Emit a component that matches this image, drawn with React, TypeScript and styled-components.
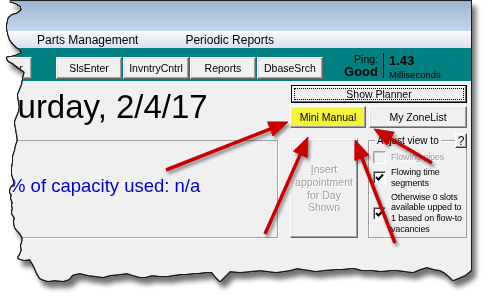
import styled, { createGlobalStyle } from 'styled-components';

const GlobalStyle = createGlobalStyle`
  html, body {
    margin: 0;
    background: #fff;
  }
  body {
    width: 490px;
    height: 306px;
    overflow: hidden;
    font-family: "Liberation Sans", Arial, sans-serif;
  }
`;

// ragged left + bottom edge of the torn screenshot
const tear: [number, number][] = [
  [10, 1], [471, 1], [471, 270], [465, 275], [458, 278], [453, 280], [449, 276],
  [444, 272], [440, 270], [434, 269], [427, 267], [420, 269], [413, 272],
  [405, 271], [398, 270], [390, 270], [381, 271], [373, 270], [362, 270],
  [355, 268], [350, 268], [342, 269], [335, 269], [323, 270], [316, 271],
  [310, 270], [303, 269], [297, 268], [290, 270], [283, 271], [276, 272],
  [268, 271], [260, 270], [250, 271], [240, 272], [230, 271], [226, 275],
  [220, 281], [216, 277], [212, 272], [205, 272], [198, 273], [193, 273],
  [186, 274], [180, 274], [173, 275], [167, 276], [160, 276], [152, 275],
  [145, 277], [140, 277], [133, 275], [127, 273], [120, 274], [110, 275],
  [103, 277], [96, 276], [88, 275], [80, 273], [75, 274], [72, 275], [69, 279],
  [63, 281], [55, 280], [48, 281], [42, 279], [40, 278], [37, 273], [35, 268],
  [33, 264], [31, 261], [30, 259], [24, 260], [18, 258], [20, 255], [22, 250],
  [21, 246], [22, 243], [23, 238], [20, 233], [17, 230], [15, 227], [14, 222],
  [15, 218], [12, 213], [13, 208], [12, 205], [13, 203], [11, 198], [12, 195],
  [10, 192], [11, 188], [15, 184], [14, 180], [12, 174], [12, 168], [13, 163],
  [13, 157], [15, 151], [16, 146], [18, 140], [17, 134], [16, 128], [15, 122],
  [17, 117], [19, 112], [20, 107], [19, 101], [18, 95], [20, 90], [22, 85],
  [23, 80], [24, 76], [25, 72], [21, 69], [18, 67], [13, 63], [9, 61], [7, 58],
  [12, 57], [16, 56], [23, 53], [20, 49], [17, 47], [15, 45], [12, 42], [10, 39],
  [9, 36], [8, 32], [7, 27], [8, 22], [9, 18], [13, 15], [17, 14], [20, 12],
  [22, 10], [21, 6], [16, 3],
];
const tearPath = `polygon(${tear.map(([x, y]) => `${x}px ${y}px`).join(', ')})`;

const arrows = [
  { x1: 166, y1: 170, x2: 288, y2: 122 },
  { x1: 265, y1: 234, x2: 308, y2: 137 },
  { x1: 395, y1: 243, x2: 355, y2: 140 },
  { x1: 432, y1: 163, x2: 374, y2: 129 },
];

const Page = styled.div`
  position: relative;
  width: 490px;
  height: 306px;
`;

const Frame = styled.div`
  width: 471px;
  filter: drop-shadow(1px 0 0 #1c1c1c) drop-shadow(-1px 0 0 #1c1c1c)
    drop-shadow(0 1px 0 #1c1c1c) drop-shadow(0 -1px 0 #1c1c1c)
    drop-shadow(4px 6px 2.5px rgba(0, 0, 0, 0.55));
`;

const Window = styled.div`
  width: 471px;
  height: 284px;
  display: flex;
  flex-direction: column;
  overflow: hidden;
  background: #f0f0f0;
  clip-path: ${tearPath};
`;

const TitleBar = styled.div`
  height: 31px;
  flex: none;
  background: linear-gradient(to bottom, #9ab3d3, #c6d7ed);
`;

const MenuBar = styled.div`
  height: 17px;
  flex: none;
  display: flex;
  align-items: center;
  gap: 47px;
  padding-left: 37px;
  font-size: 12px;
  color: #000;
  background: linear-gradient(to bottom, #ffffff 0, #f1f3fa 22%, #dce0f1 100%);
`;

const Toolbar = styled.div`
  height: 24px;
  flex: none;
  display: flex;
  align-items: flex-start;
  gap: 1px;
  padding-top: 9px;
  background: #008080;
`;

const ToolButton = styled.div<{ $lead?: boolean }>`
  width: 66px;
  height: 22px;
  box-sizing: border-box;
  flex: none;
  display: flex;
  align-items: center;
  justify-content: center;
  margin-left: ${(p) => (p.$lead ? '-34px' : '0')};
  margin-right: ${(p) => (p.$lead ? '23px' : '0')};
  background: #f0f0f0;
  border: 1px solid;
  border-color: #fff #696969 #696969 #fff;
  box-shadow: inset -1px -1px #a0a0a0, inset 1px 1px #e3e3e3;
  font-size: 10.5px;
  color: #000;
`;

const Ping = styled.div`
  display: flex;
  align-items: stretch;
  height: 25px;
  margin: -4px 0 0 14px;
`;

const PingLabels = styled.div`
  width: 40px;
  display: flex;
  flex-direction: column;
  align-items: flex-end;
  color: #000;
`;

const PingSmall = styled.span<{ $size: number }>`
  font-size: ${(p) => p.$size}px;
  line-height: 11px;
  margin-top: 1px;
`;

const PingBig = styled.span`
  font-size: 13px;
  font-weight: bold;
  line-height: 14px;
`;

const Divider = styled.div`
  width: 1px;
  margin: 0 5px;
  background: #000;
`;

const PingValues = styled.div`
  display: flex;
  flex-direction: column;
  padding-top: 1px;
  color: #000;
`;

const Content = styled.div`
  flex: 1;
  display: flex;
  flex-direction: column;
  padding: 4px 4px 0 0;
`;

const TopRow = styled.div`
  display: flex;
  justify-content: space-between;
  align-items: flex-start;
`;

const DateTitle = styled.div`
  margin: 5px 0 0 -32px;
  font-size: 33px;
  line-height: 33px;
  color: #000;
  white-space: nowrap;
`;

const SideButtons = styled.div`
  width: 177px;
  flex: none;
  display: flex;
  flex-direction: column;
  gap: 3px;
`;

const ButtonRow = styled.div`
  display: flex;
  gap: 3px;
`;

const Button = styled.div<{ $w?: number; $h: number; $yellow?: boolean; $disabled?: boolean }>`
  width: ${(p) => (p.$w ? `${p.$w}px` : 'auto')};
  flex: ${(p) => (p.$w ? 'none' : '1 1 auto')};
  height: ${(p) => p.$h}px;
  box-sizing: border-box;
  display: flex;
  align-items: center;
  justify-content: center;
  text-align: center;
  background: ${(p) => (p.$yellow ? '#f4f43a' : '#f0f0f0')};
  border: 1px solid;
  border-color: #fff #696969 #696969 #fff;
  box-shadow: inset -1px -1px #a0a0a0, inset 1px 1px #e3e3e3;
  font-size: 10.5px;
  line-height: 12.7px;
  color: ${(p) => (p.$disabled ? '#a0a0a0' : '#000')};
  text-shadow: ${(p) => (p.$disabled ? '1px 1px 0 #fff' : 'none')};
`;

const DefaultButton = styled(Button)`
  flex: none;
  margin-left: 1px;
  border-color: #000;
  box-shadow: inset -1px -1px #696969, inset 1px 1px #fff;
  outline: 1px dotted #000;
  outline-offset: -4px;
`;

const Key = styled.span`
  text-decoration: underline;
`;

const BottomRow = styled.div`
  display: flex;
  height: 98px;
  margin-top: 12px;
`;

const CapacityBox = styled.div`
  flex: 1;
  margin: 0 12px 0 -10px;
  padding: 34px 0 0 18px;
  border: 1px solid #a0a0a0;
  box-shadow: 1px 1px #fff;
  font-size: 18.5px;
  line-height: 22px;
  color: #0000cc;
  white-space: nowrap;
`;

const InsertButton = styled(Button)`
  margin: -1px 10px 0 0;
`;

const GroupBox = styled.div`
  width: 99px;
  flex: none;
  box-sizing: border-box;
  display: flex;
  flex-direction: column;
  gap: 3px;
  padding: 0 2px 0 4px;
  border: 1px solid #a0a0a0;
  box-shadow: inset 1px 1px #fff;
`;

const GroupHead = styled.div`
  display: flex;
  justify-content: space-between;
  align-items: center;
  height: 15px;
  margin: -8px -3px 0 0;
`;

const Legend = styled.span`
  margin-left: 2px;
  padding: 0 2px;
  background: #f0f0f0;
  font-size: 10px;
  color: #000;
`;

const HelpButton = styled.div`
  width: 12px;
  height: 15px;
  box-sizing: border-box;
  display: flex;
  align-items: center;
  justify-content: center;
  background: #f0f0f0;
  border: 1px solid;
  border-color: #fff #404040 #404040 #fff;
  box-shadow: inset -1px -1px #a0a0a0;
  font-size: 12px;
  color: #000;
`;

const Option = styled.div`
  display: flex;
  align-items: center;
  gap: 5px;
`;

const Box = styled.span<{ $disabled?: boolean }>`
  width: 13px;
  height: 13px;
  flex: none;
  box-sizing: border-box;
  display: flex;
  align-items: center;
  justify-content: center;
  background: ${(p) => (p.$disabled ? '#f0f0f0' : '#fff')};
  border: 1px solid;
  border-color: #a0a0a0 #fff #fff #a0a0a0;
  box-shadow: inset 1px 1px ${(p) => (p.$disabled ? '#c8c8c8' : '#404040')};
`;

const OptionText = styled.span<{ $disabled?: boolean }>`
  font-size: 9px;
  letter-spacing: -0.15px;
  line-height: 10.8px;
  color: ${(p) => (p.$disabled ? '#a0a0a0' : '#000')};
  text-shadow: ${(p) => (p.$disabled ? '1px 1px 0 #fff' : 'none')};
  white-space: nowrap;
`;

const ArrowLayer = styled.svg`
  position: absolute;
  left: 0;
  top: 0;
  pointer-events: none;
  filter: drop-shadow(2px 3px 1.5px rgba(0, 0, 0, 0.4));
`;

const Check = ({ on, disabled }: { on?: boolean; disabled?: boolean }) => (
  <Box $disabled={disabled}>
    {on && (
      <svg width="9" height="9" viewBox="0 0 9 9">
        <path d="M1 4 L3.5 6.5 L8 1.5" fill="none" stroke="#000" strokeWidth="2" />
      </svg>
    )}
  </Box>
);

const Arrow = ({ x1, y1, x2, y2 }: { x1: number; y1: number; x2: number; y2: number }) => {
  const len = Math.hypot(x2 - x1, y2 - y1);
  const ux = (x2 - x1) / len;
  const uy = (y2 - y1) / len;
  const bx = x2 - ux * 19;
  const by = y2 - uy * 19;
  const w = 7.5;
  return (
    <g fill="#c80000" stroke="#c80000">
      <line x1={x1} y1={y1} x2={bx + ux * 3} y2={by + uy * 3} strokeWidth="3.5" />
      <polygon
        strokeWidth="1"
        strokeLinejoin="round"
        points={`${x2},${y2} ${bx - uy * w},${by + ux * w} ${bx + uy * w},${by - ux * w}`}
      />
    </g>
  );
};

export default function App() {
  return (
    <Page>
      <GlobalStyle />
      <Frame>
        <Window>
          <TitleBar />
          <MenuBar>
            <span>Parts Management</span>
            <span>Periodic Reports</span>
          </MenuBar>
          <Toolbar>
            <ToolButton $lead>Scheduler</ToolButton>
            <ToolButton>SlsEnter</ToolButton>
            <ToolButton>InvntryCntrl</ToolButton>
            <ToolButton>Reports</ToolButton>
            <ToolButton>DbaseSrch</ToolButton>
            <Ping>
              <PingLabels>
                <PingSmall $size={10.5}>Ping:</PingSmall>
                <PingBig>Good</PingBig>
              </PingLabels>
              <Divider />
              <PingValues>
                <PingBig>1.43</PingBig>
                <PingSmall $size={9.5}>Milliseconds</PingSmall>
              </PingValues>
            </Ping>
          </Toolbar>
          <Content>
            <TopRow>
              <DateTitle>Saturday, 2/4/17</DateTitle>
              <SideButtons>
                <DefaultButton $h={18}>
                  <span>
                    <Key>S</Key>how Planner
                  </span>
                </DefaultButton>
                <ButtonRow>
                  <Button $w={76} $h={22} $yellow>
                    Mini Manual
                  </Button>
                  <Button $h={22}>My ZoneList</Button>
                </ButtonRow>
              </SideButtons>
            </TopRow>
            <BottomRow>
              <CapacityBox>% of capacity used: n/a</CapacityBox>
              <InsertButton $w={68} $h={99} $disabled>
                <span>
                  <Key>I</Key>nsert
                  <br />
                  appointment
                  <br />
                  for Day
                  <br />
                  Shown
                </span>
              </InsertButton>
              <GroupBox>
                <GroupHead>
                  <Legend>Adjust view to</Legend>
                  <HelpButton>?</HelpButton>
                </GroupHead>
                <Option>
                  <Check disabled />
                  <OptionText $disabled>Flowing pipes</OptionText>
                </Option>
                <Option>
                  <Check on />
                  <OptionText>
                    Flowing time
                    <br />
                    segments
                  </OptionText>
                </Option>
                <Option>
                  <Check on />
                  <OptionText>
                    Otherwise 0 slots
                    <br />
                    available upped to
                    <br />
                    1 based on flow-to
                    <br />
                    vacancies
                  </OptionText>
                </Option>
              </GroupBox>
            </BottomRow>
          </Content>
        </Window>
      </Frame>
      <ArrowLayer width="490" height="306" viewBox="0 0 490 306">
        {arrows.map((a, i) => (
          <Arrow key={i} {...a} />
        ))}
      </ArrowLayer>
    </Page>
  );
}
